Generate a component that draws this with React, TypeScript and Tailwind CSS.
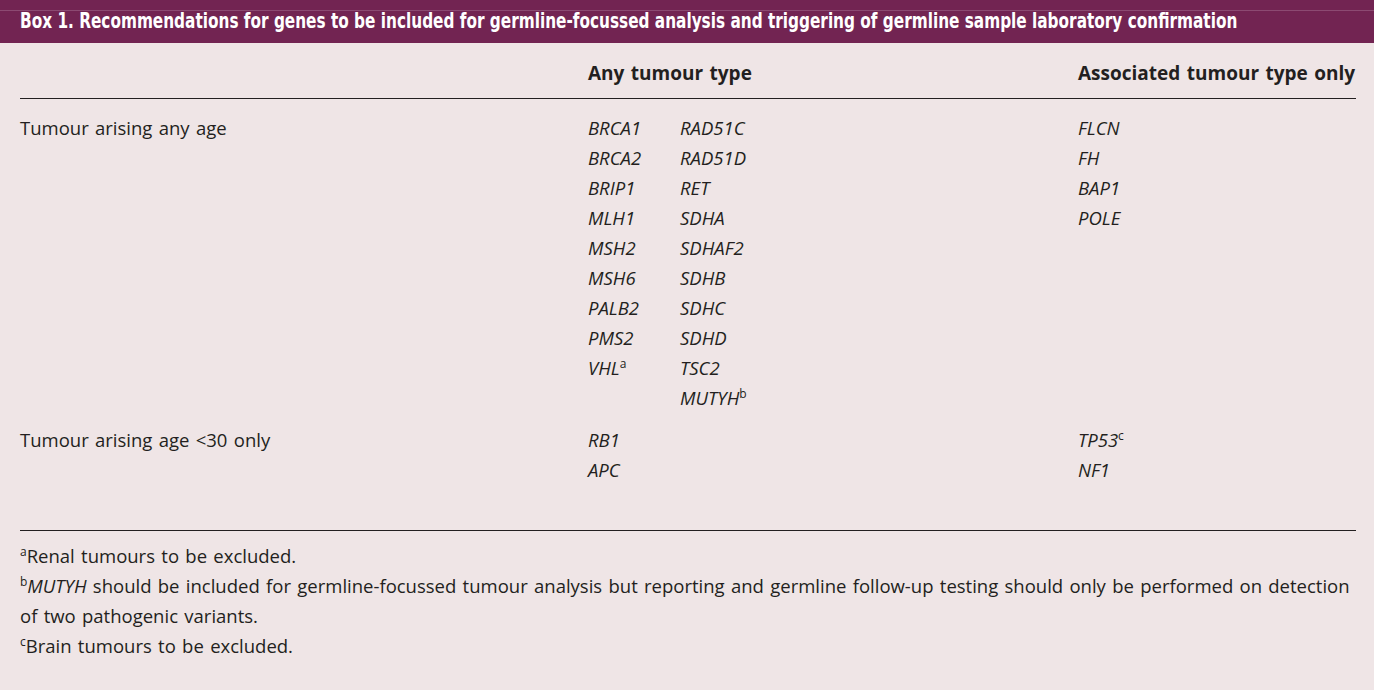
const body = { fontFamily: '"Open Sans", "Noto Sans", sans-serif', wordSpacing: "1.5px" };

const col1 = ["BRCA1", "BRCA2", "BRIP1", "MLH1", "MSH2", "MSH6", "PALB2", "PMS2", "VHL"];
const col2 = ["RAD51C", "RAD51D", "RET", "SDHA", "SDHAF2", "SDHB", "SDHC", "SDHD", "TSC2", "MUTYH"];
const col3 = ["FLCN", "FH", "BAP1", "POLE"];

const sup: Record<string, string> = { VHL: "a", MUTYH: "b", TP53: "c" };

const Sup = ({ c }: { c: string }) => (
  <sup className="not-italic text-[12px] relative -top-[7px]">{c}</sup>
);

const Gene = ({ name }: { name: string }) => (
  <div className="italic">
    {name}
    {sup[name] && <Sup c={sup[name]} />}
  </div>
);

const App = () => {
  return (
    <div className="w-[1374px] h-[690px] bg-[#efe5e6] text-[#231f20] overflow-hidden" style={body}>
      <div className="h-[43px] bg-[#722452] pt-[10px]">
        <div className="border-t border-[#8c4a72]" />
        <h1
          className="pl-[20px] text-white font-bold text-[20.5px] leading-[21px] whitespace-nowrap"
          style={{ fontFamily: '"DejaVu Sans Condensed", "DejaVu Sans", sans-serif', wordSpacing: "0px" }}
        >
          <span className="inline-block origin-left scale-x-[0.83]">
            Box 1. Recommendations for genes to be included for germline-focussed analysis and triggering of germline sample laboratory confirmation
          </span>
        </h1>
      </div>

      <div className="pl-[20px] pr-[18px] text-[18.5px] leading-[30px]">
        <div className="grid grid-cols-[568px_92px_398px_1fr] h-[56px] border-b border-[#231f20] pt-[15px] font-bold text-[19px]">
          <div />
          <div className="col-span-2">Any tumour type</div>
          <div className="whitespace-nowrap">Associated tumour type only</div>
        </div>

        <div className="grid grid-cols-[568px_92px_398px_1fr] pt-[14px]">
          <div>Tumour arising any age</div>
          <div>{col1.map((g) => <Gene key={g} name={g} />)}</div>
          <div>{col2.map((g) => <Gene key={g} name={g} />)}</div>
          <div>{col3.map((g) => <Gene key={g} name={g} />)}</div>
        </div>

        <div className="grid grid-cols-[568px_92px_398px_1fr] pt-[12px] h-[118px] border-b border-[#231f20]">
          <div>Tumour arising age &lt;30 only</div>
          <div>
            <Gene name="RB1" />
            <Gene name="APC" />
          </div>
          <div />
          <div>
            <Gene name="TP53" />
            <Gene name="NF1" />
          </div>
        </div>

        <div className="pt-[10px]">
          <p>
            <Sup c="a" />Renal tumours to be excluded.
          </p>
          <p className="whitespace-nowrap">
            <Sup c="b" />
            <span className="italic">MUTYH</span> should be included for germline-focussed tumour analysis but reporting and germline follow-up testing should only be performed on detection
            <br />
            of two pathogenic variants.
          </p>
          <p>
            <Sup c="c" />Brain tumours to be excluded.
          </p>
        </div>
      </div>
    </div>
  );
};

export default App;
